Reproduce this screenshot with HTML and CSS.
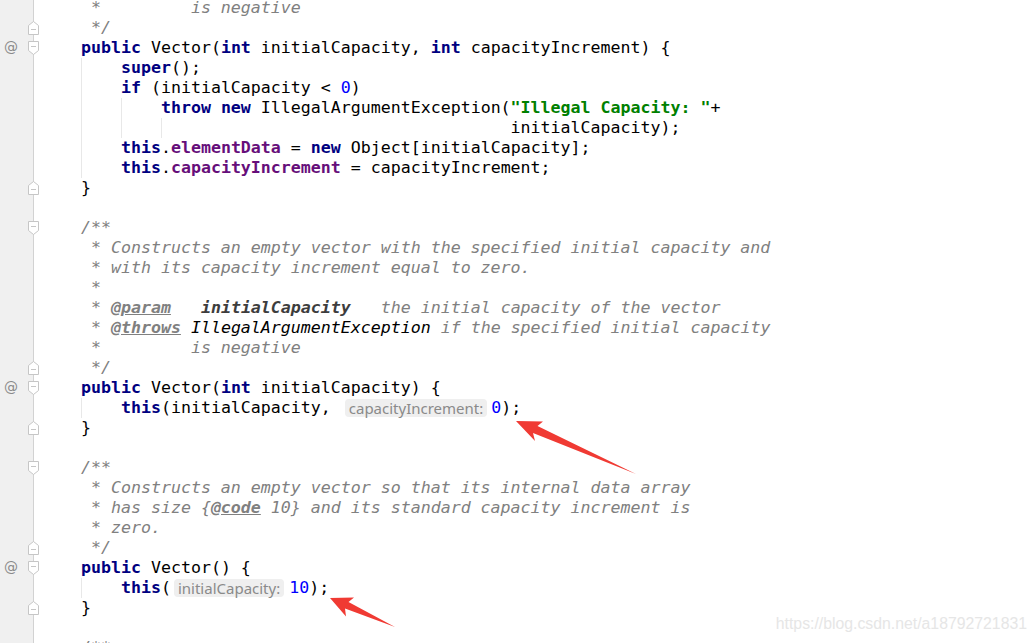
FILE: index.html
```html
<!DOCTYPE html>
<html>
<head>
<meta charset="utf-8">
<link rel="stylesheet" href="styles.css">
</head>
<body>
<div class="screen">
  <div class="editor">
    <div class="row"><div class="gutter"></div><div class="code c"> *         is negative</div></div>
    <div class="row"><div class="gutter"><svg class="fold" viewBox="0 0 11 14"><path class="fp" d="M0.5 13.5H10.5V4.5L5.5 0.5L0.5 4.5Z"/><path class="fm" d="M3 8.5H8"/></svg></div><div class="code c"> */</div></div>
    <div class="row"><div class="gutter"><span class="at">@</span><svg class="fold" viewBox="0 0 11 14"><path class="fp" d="M0.5 0.5H10.5V9.5L5.5 13.5L0.5 9.5Z"/><path class="fm" d="M3 5.5H8"/></svg></div><div class="code"><span class="k">public</span> Vector(<span class="k">int</span> initialCapacity, <span class="k">int</span> capacityIncrement) {</div></div>
    <div class="row"><div class="gutter"></div><div class="code g1">    <span class="k">super</span>();</div></div>
    <div class="row"><div class="gutter"></div><div class="code g1">    <span class="k">if</span> (initialCapacity &lt; <span class="n">0</span>)</div></div>
    <div class="row"><div class="gutter"></div><div class="code g2">        <span class="k">throw new</span> IllegalArgumentException(<span class="s">"Illegal Capacity: "</span>+</div></div>
    <div class="row"><div class="gutter"></div><div class="code g3">                                           initialCapacity);</div></div>
    <div class="row"><div class="gutter"></div><div class="code g1">    <span class="k">this</span>.<span class="f">elementData</span> = <span class="k">new</span> Object[initialCapacity];</div></div>
    <div class="row"><div class="gutter"></div><div class="code g1">    <span class="k">this</span>.<span class="f">capacityIncrement</span> = capacityIncrement;</div></div>
    <div class="row"><div class="gutter"><svg class="fold" viewBox="0 0 11 14"><path class="fp" d="M0.5 13.5H10.5V4.5L5.5 0.5L0.5 4.5Z"/><path class="fm" d="M3 8.5H8"/></svg></div><div class="code">}</div></div>
    <div class="row"><div class="gutter"></div><div class="code"></div></div>
    <div class="row"><div class="gutter"><svg class="fold" viewBox="0 0 11 14"><path class="fp" d="M0.5 0.5H10.5V9.5L5.5 13.5L0.5 9.5Z"/><path class="fm" d="M3 5.5H8"/></svg></div><div class="code c">/**</div></div>
    <div class="row"><div class="gutter"></div><div class="code c"> * Constructs an empty vector with the specified initial capacity and</div></div>
    <div class="row"><div class="gutter"></div><div class="code c"> * with its capacity increment equal to zero.</div></div>
    <div class="row"><div class="gutter"></div><div class="code c"> *</div></div>
    <div class="row"><div class="gutter"></div><div class="code c"> * <span class="t">@param</span>   <span class="p">initialCapacity</span>   the initial capacity of the vector</div></div>
    <div class="row"><div class="gutter"></div><div class="code c"> * <span class="t">@throws</span> <span class="x">IllegalArgumentException</span> if the specified initial capacity</div></div>
    <div class="row"><div class="gutter"></div><div class="code c"> *         is negative</div></div>
    <div class="row"><div class="gutter"><svg class="fold" viewBox="0 0 11 14"><path class="fp" d="M0.5 13.5H10.5V4.5L5.5 0.5L0.5 4.5Z"/><path class="fm" d="M3 8.5H8"/></svg></div><div class="code c"> */</div></div>
    <div class="row"><div class="gutter"><span class="at">@</span><svg class="fold" viewBox="0 0 11 14"><path class="fp" d="M0.5 0.5H10.5V9.5L5.5 13.5L0.5 9.5Z"/><path class="fm" d="M3 5.5H8"/></svg></div><div class="code"><span class="k">public</span> Vector(<span class="k">int</span> initialCapacity) {</div></div>
    <div class="row"><div class="gutter"></div><div class="code g1">    <span class="k">this</span>(initialCapacity, <span class="hint h1">capacityIncrement:</span><span class="n">0</span>);</div></div>
    <div class="row"><div class="gutter"><svg class="fold" viewBox="0 0 11 14"><path class="fp" d="M0.5 13.5H10.5V4.5L5.5 0.5L0.5 4.5Z"/><path class="fm" d="M3 8.5H8"/></svg></div><div class="code">}</div></div>
    <div class="row"><div class="gutter"></div><div class="code"></div></div>
    <div class="row"><div class="gutter"><svg class="fold" viewBox="0 0 11 14"><path class="fp" d="M0.5 0.5H10.5V9.5L5.5 13.5L0.5 9.5Z"/><path class="fm" d="M3 5.5H8"/></svg></div><div class="code c">/**</div></div>
    <div class="row"><div class="gutter"></div><div class="code c"> * Constructs an empty vector so that its internal data array</div></div>
    <div class="row"><div class="gutter"></div><div class="code c"> * has size {<span class="t">@code</span> 10} and its standard capacity increment is</div></div>
    <div class="row"><div class="gutter"></div><div class="code c"> * zero.</div></div>
    <div class="row"><div class="gutter"><svg class="fold" viewBox="0 0 11 14"><path class="fp" d="M0.5 13.5H10.5V4.5L5.5 0.5L0.5 4.5Z"/><path class="fm" d="M3 8.5H8"/></svg></div><div class="code c"> */</div></div>
    <div class="row"><div class="gutter"><span class="at">@</span><svg class="fold" viewBox="0 0 11 14"><path class="fp" d="M0.5 0.5H10.5V9.5L5.5 13.5L0.5 9.5Z"/><path class="fm" d="M3 5.5H8"/></svg></div><div class="code"><span class="k">public</span> Vector() {</div></div>
    <div class="row"><div class="gutter"></div><div class="code g1">    <span class="k">this</span>(<span class="hint h2">initialCapacity:</span><span class="n">10</span>);</div></div>
    <div class="row"><div class="gutter"><svg class="fold" viewBox="0 0 11 14"><path class="fp" d="M0.5 13.5H10.5V4.5L5.5 0.5L0.5 4.5Z"/><path class="fm" d="M3 8.5H8"/></svg></div><div class="code">}</div></div>
    <div class="row"><div class="gutter"></div><div class="code"></div></div>
    <div class="row"><div class="gutter"></div><div class="code c">/**</div></div>
  </div>
  <svg class="arrows" width="1035" height="643" viewBox="0 0 1035 643">
    <polygon points="516,421 543,421.5 537.5,426 636,474 533,433 535,441" fill="#f03a33"/>
    <polygon points="330,598 354,597.5 348.5,602 395,627 345,608.5 346,616.5" fill="#f03a33"/>
  </svg>
  <div class="watermark">https://blog.csdn.net/a18792721831</div>
</div>
</body>
</html>
```

FILE: styles.css
```css
html, body {
  margin: 0;
  padding: 0;
  background: #ffffff;
}

.screen {
  position: relative;
  width: 1035px;
  height: 643px;
  overflow: hidden;
  background: #ffffff;
}

.editor {
  display: flex;
  flex-direction: column;
  margin-top: -2px;
}

.row {
  display: flex;
  height: 20px;
}

.gutter {
  position: relative;
  width: 33px;
  flex: none;
  background: #f0f0f0;
  border-right: 1px solid #d2d2d2;
}

.at {
  position: absolute;
  left: 4px;
  top: 0;
  font-family: "DejaVu Sans", sans-serif;
  font-size: 14px;
  line-height: 18px;
  color: #8a8a8a;
}

.fold {
  position: absolute;
  left: 28px;
  top: 3px;
  width: 11px;
  height: 14px;
}

.fp {
  fill: #ffffff;
  stroke: #c6c6c6;
  stroke-width: 1;
}

.fm {
  stroke: #c6c6c6;
  stroke-width: 1;
}

.code {
  margin-left: 47px;
  flex: 1;
  font-family: "DejaVu Sans Mono", "Liberation Mono", monospace;
  font-size: 16.6px;
  line-height: 20px;
  white-space: pre;
  color: #000000;
}

.g1 {
  background: linear-gradient(#e8e8e8, #e8e8e8) 0 0 / 1px 100% no-repeat;
}

.g2 {
  background:
    linear-gradient(#e8e8e8, #e8e8e8) 0 0 / 1px 100% no-repeat,
    linear-gradient(#e8e8e8, #e8e8e8) 40px 0 / 1px 100% no-repeat;
}

.g3 {
  background:
    linear-gradient(#e8e8e8, #e8e8e8) 0 0 / 1px 100% no-repeat,
    linear-gradient(#e8e8e8, #e8e8e8) 40px 0 / 1px 100% no-repeat,
    linear-gradient(#e8e8e8, #e8e8e8) 80px 0 / 1px 100% no-repeat;
}

.k {
  color: #000080;
  font-weight: bold;
}

.f {
  color: #660e7a;
  font-weight: bold;
}

.n {
  color: #0000ff;
}

.s {
  color: #008000;
  font-weight: bold;
}

.c {
  color: #808080;
  font-style: italic;
}

.t {
  color: #808080;
  font-weight: bold;
  text-decoration: underline;
}

.p {
  color: #3d3d3d;
  font-weight: bold;
}

.x {
  color: #000000;
}

.hint {
  display: inline-block;
  vertical-align: top;
  margin-top: 1px;
  height: 18px;
  padding: 0 4px;
  border-radius: 4px;
  background: #efefef;
  color: #8a8a8a;
  font-family: "Noto Sans", "Open Sans", sans-serif;
  font-style: normal;
  font-size: 15px;
  line-height: 18px;
}

.h1 {
  margin-left: 4px;
  margin-right: 4px;
}

.h2 {
  margin-left: 3px;
  margin-right: 5px;
}

.arrows {
  position: absolute;
  left: 0;
  top: 0;
  pointer-events: none;
}

.watermark {
  position: absolute;
  right: 8px;
  top: 614px;
  font-family: "Liberation Sans", Arial, sans-serif;
  font-size: 15.8px;
  line-height: 20px;
  color: #e6e6e6;
}
```
